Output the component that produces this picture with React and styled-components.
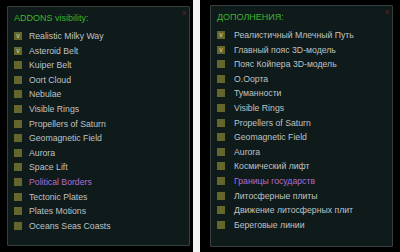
import * as React from 'react';
import styled, { createGlobalStyle } from 'styled-components';

const GlobalStyle = createGlobalStyle`
    html, body {
        margin: 0;
        padding: 0;
        background: #ffffff;
    }
    body {
        font-family: 'Liberation Sans', Arial, Helvetica, sans-serif;
    }
`;

const Page = styled.div`
    display: flex;
    width: 400px;
    height: 252px;
    gap: 7px;
    background: #f4f4f4;
`;

const Shot = styled.div`
    width: ${p => p.width}px;
    height: 252px;
    box-sizing: border-box;
    background: #000000;
    padding: ${p => p.pad};
    display: flex;
`;

const Panel = styled.div`
    position: relative;
    flex: 1;
    box-sizing: border-box;
    background: #0f1a1b;
    border: 1px solid #36403f;
    border-radius: 1px;
    padding: 3.7px 6px 0 6px;
`;

const Close = styled.span`
    position: absolute;
    top: 2px;
    right: 3px;
    font-size: 8px;
    line-height: 8px;
    color: #7a1a2a;
`;

const Title = styled.div`
    font-size: 9px;
    line-height: 14.6px;
    color: #3db42e;
    margin-bottom: 3.4px;
    white-space: nowrap;
`;

const List = styled.div`
    display: flex;
    flex-direction: column;
`;

const Row = styled.div`
    display: flex;
    align-items: center;
    height: 14.6px;
    gap: ${p => p.gap}px;
    white-space: nowrap;
`;

const Box = styled.span`
    width: 8px;
    height: 8px;
    flex: none;
    background: #65662b;
    display: flex;
    align-items: center;
    justify-content: center;
    font-size: 7px;
    line-height: 7px;
    color: #d8d8a0;
`;

const Label = styled.span`
    font-size: ${p => p.size}px;
    color: ${p => (p.purple ? '#b06ed0' : '#bfc3c3')};
`;

const en = [
    ['Realistic Milky Way', true],
    ['Asteroid Belt', true],
    ['Kuiper Belt'],
    ['Oort Cloud'],
    ['Nebulae'],
    ['Visible Rings'],
    ['Propellers of Saturn'],
    ['Geomagnetic Field'],
    ['Aurora'],
    ['Space Lift'],
    ['Political Borders', false, true],
    ['Tectonic Plates'],
    ['Plates Motions'],
    ['Oceans Seas Coasts'],
];

const ru = [
    ['Реалистичный Млечный Путь', true],
    ['Главный пояс 3D-модель', true],
    ['Пояс Койпера 3D-модель'],
    ['О.Оорта'],
    ['Туманности'],
    ['Visible Rings'],
    ['Propellers of Saturn'],
    ['Geomagnetic Field'],
    ['Aurora'],
    ['Космический лифт'],
    ['Границы государств', false, true],
    ['Литосферные плиты'],
    ['Движение литосферных плит'],
    ['Береговые линии'],
];

const AddonsPanel = ({ title, items, gap, size }) => (
    <Panel>
        <Close>x</Close>
        <Title>{title}</Title>
        <List>
            {items.map(([name, checked, purple]) => (
                <Row key={name} gap={gap}>
                    <Box>{checked ? 'v' : ''}</Box>
                    <Label size={size} purple={purple}>{name}</Label>
                </Row>
            ))}
        </List>
    </Panel>
);

const App = () => (
    <>
        <GlobalStyle />
        <Page>
            <Shot width={193} pad="6px 3px 6px 7px">
                <AddonsPanel title="ADDONS visibility:" items={en} gap={7} size={8.7} />
            </Shot>
            <Shot width={200} pad="5px 7px 5px 10px">
                <AddonsPanel title="ДОПОЛНЕНИЯ:" items={ru} gap={9} size={8.7} />
            </Shot>
        </Page>
    </>
);

export default App;
